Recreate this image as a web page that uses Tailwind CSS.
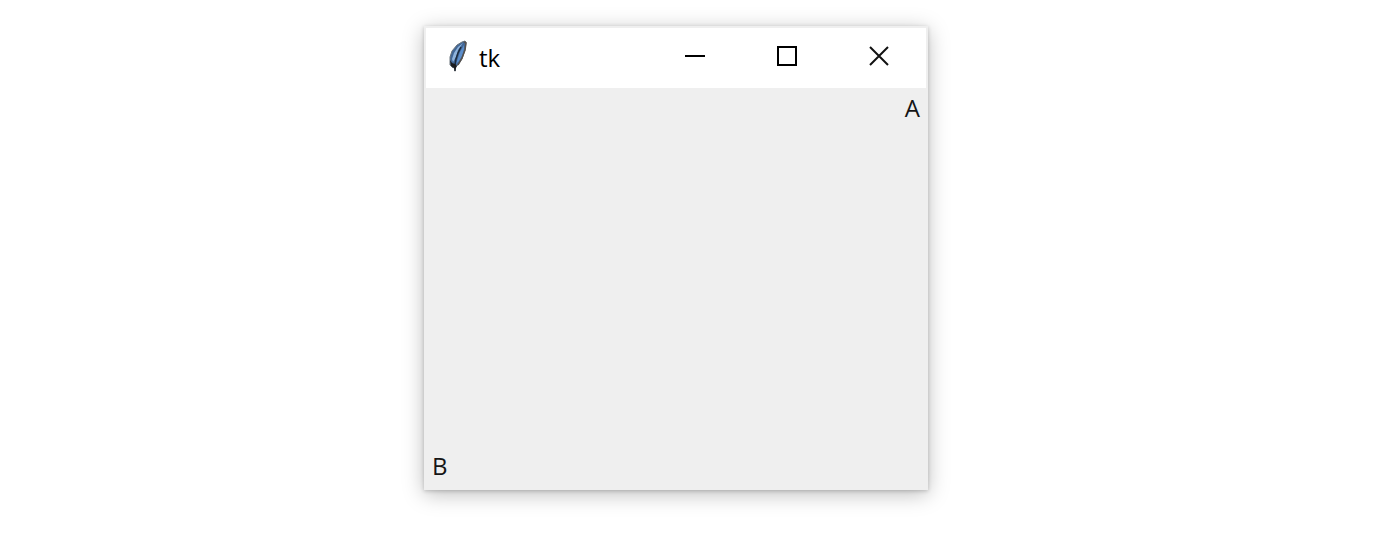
<!DOCTYPE html>
<html lang="en">
<head>
<meta charset="utf-8">
<meta name="viewport" content="width=device-width, initial-scale=1">
<title>tk</title>
<script src="https://cdn.jsdelivr.net/npm/@tailwindcss/browser@4"></script>
</head>
<body class="flex min-h-screen items-start justify-center bg-white pt-[26px] pr-[27px] font-['Open_Sans','Noto_Sans',sans-serif] text-black">
<main class="flex w-full max-w-[504px] flex-col border-2 border-[#efefef] bg-[#efefef] shadow-[0_4px_20px_rgba(0,0,0,0.26),0_1px_4px_rgba(0,0,0,0.2)]">
  <header class="flex h-[60px] items-center bg-white pr-px pb-1 pl-[21px]">
    <svg class="h-[34px] w-[21px] shrink-0" viewBox="0 0 21 34" aria-hidden="true">
      <path d="M18 2L15 3L10 6L5 12L3 18L3 26L6 29L11 26L15 20L18 11L19 3Z" fill="#426796" stroke="#6b747d" stroke-width="1"/>
      <path d="M16 4L11 8L7 14L5 20L6 23L9 18L11 11Z" fill="#8fb3dc"/>
      <path d="M17 6L13 13L9 25L12 22L15 17L17 10Z" fill="#5c8ecb"/>
      <path d="M17 3L19 4L18 11L15 19L11 26" fill="none" stroke="#55504c" stroke-width="1.5"/>
      <path d="M14 8L11 14L9 20L8 26L8 32" fill="none" stroke="#1c2b3d" stroke-width="1.5"/>
      <path d="M3 21L5 24L8 25L10 27L9 29L8 33L7 29L4 27Z" fill="#1c1d1f"/>
    </svg>
    <h1 class="ml-[11px] pt-1 text-2xl leading-8">tk</h1>
    <div class="ml-auto flex h-full">
      <button type="button" aria-label="Minimize" class="flex w-[92px] items-center justify-center">
        <svg class="size-5" viewBox="0 0 20 20" shape-rendering="crispEdges"><path d="M0 10H20" stroke="#000" stroke-width="2"/></svg>
      </button>
      <button type="button" aria-label="Maximize" class="flex w-[92px] items-center justify-center">
        <svg class="size-5" viewBox="0 0 20 20" shape-rendering="crispEdges"><path d="M1 1H19V19H1Z" fill="none" stroke="#000" stroke-width="2"/></svg>
      </button>
      <button type="button" aria-label="Close" class="flex w-[92px] items-center justify-center">
        <svg class="size-5" viewBox="0 0 20 20"><path d="M1 1L19 19M19 1L1 19" stroke="#111" stroke-width="2"/></svg>
      </button>
    </div>
  </header>
  <section class="flex min-h-[400px] flex-col justify-between px-1.5 pt-0.5 pb-1 text-2xl leading-9 text-[#151515]">
    <p class="self-end">A</p>
    <p class="self-start">B</p>
  </section>
</main>
</body>
</html>
